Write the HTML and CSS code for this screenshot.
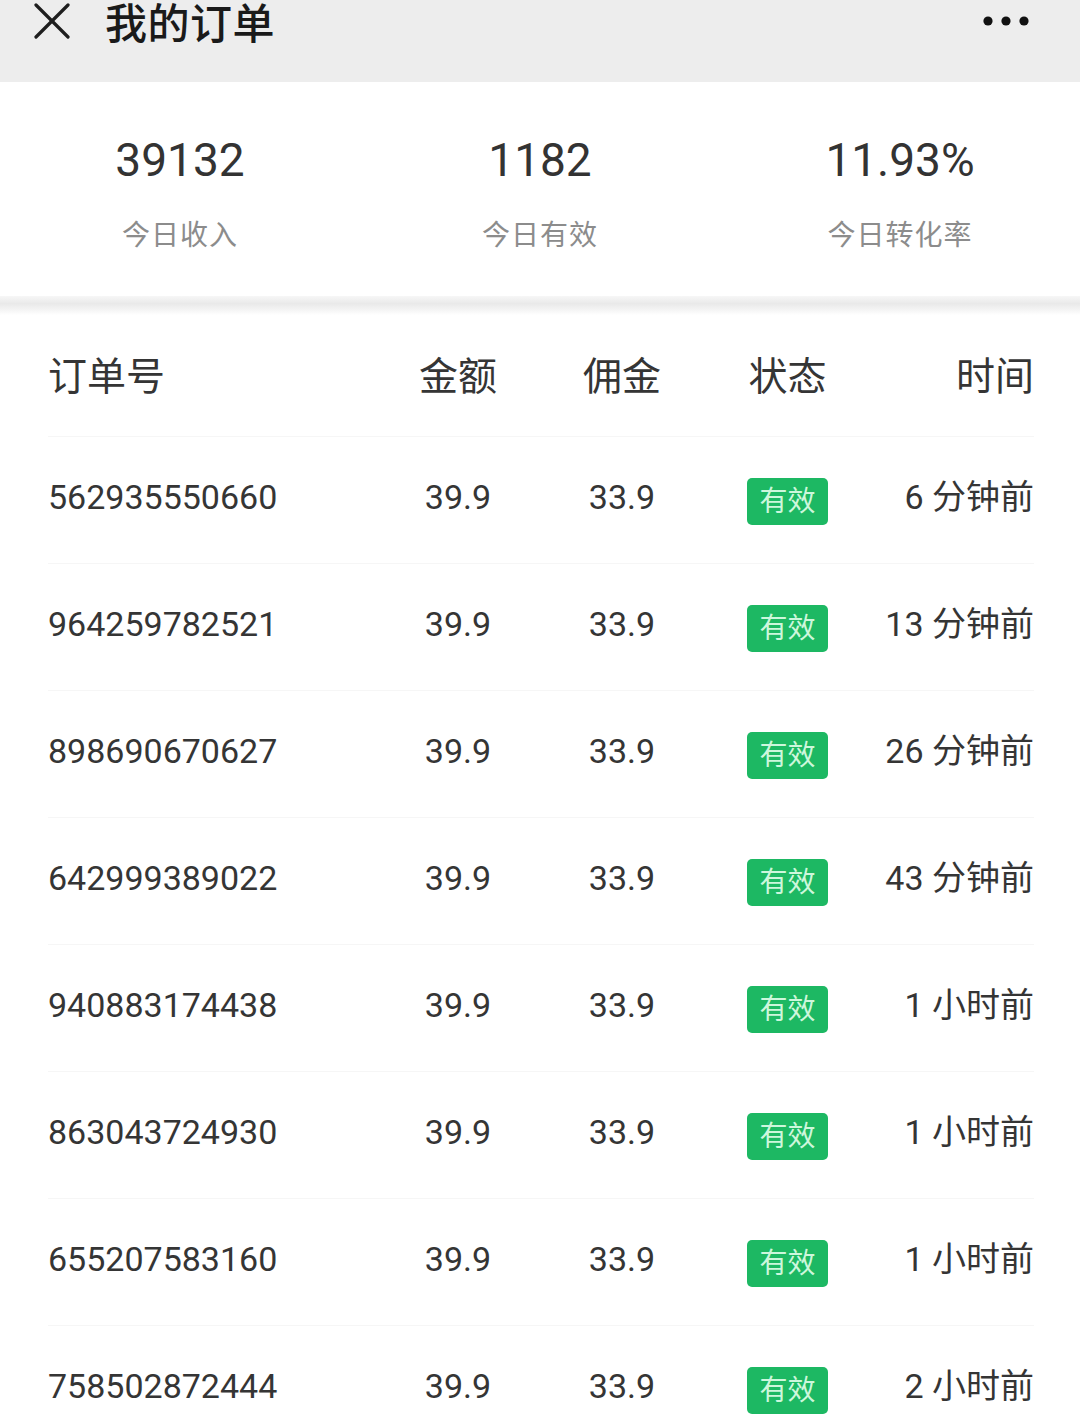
FILE: index.html
```html
<!DOCTYPE html>
<html lang="zh-CN">
<head>
<meta charset="utf-8">
<title>我的订单</title>
<link rel="stylesheet" href="styles.css">
</head>
<body>
<header class="topbar">
  <div class="topbar-row">
    <svg class="close-icon" width="38" height="36" viewBox="0 0 38 36">
      <line x1="3" y1="2" x2="35" y2="34" stroke="#1e1e1e" stroke-width="3.2" stroke-linecap="round"/>
      <line x1="35" y1="2" x2="3" y2="34" stroke="#1e1e1e" stroke-width="3.2" stroke-linecap="round"/>
    </svg>
    <h1 class="title">我的订单</h1>
    <svg class="more-icon" width="50" height="12" viewBox="0 0 50 12">
      <circle cx="6" cy="6" r="4.6" fill="#111"/>
      <circle cx="24" cy="6" r="4.6" fill="#111"/>
      <circle cx="42" cy="6" r="4.6" fill="#111"/>
    </svg>
  </div>
</header>

<section class="stats">
  <div class="stat"><div class="stat-value">39132</div><div class="stat-label">今日收入</div></div>
  <div class="stat"><div class="stat-value">1182</div><div class="stat-label">今日有效</div></div>
  <div class="stat"><div class="stat-value">11.93%</div><div class="stat-label">今日转化率</div></div>
</section>

<div class="separator"></div>

<section class="table">
  <div class="row head">
    <div class="c-id">订单号</div>
    <div class="c-amt">金额</div>
    <div class="c-com">佣金</div>
    <div class="c-st">状态</div>
    <div class="c-time">时间</div>
  </div>
  <div class="row">
    <div class="c-id">562935550660</div><div class="c-amt">39.9</div><div class="c-com">33.9</div>
    <div class="c-st"><span class="badge">有效</span></div><div class="c-time">6 分钟前</div>
  </div>
  <div class="row">
    <div class="c-id">964259782521</div><div class="c-amt">39.9</div><div class="c-com">33.9</div>
    <div class="c-st"><span class="badge">有效</span></div><div class="c-time">13 分钟前</div>
  </div>
  <div class="row">
    <div class="c-id">898690670627</div><div class="c-amt">39.9</div><div class="c-com">33.9</div>
    <div class="c-st"><span class="badge">有效</span></div><div class="c-time">26 分钟前</div>
  </div>
  <div class="row">
    <div class="c-id">642999389022</div><div class="c-amt">39.9</div><div class="c-com">33.9</div>
    <div class="c-st"><span class="badge">有效</span></div><div class="c-time">43 分钟前</div>
  </div>
  <div class="row">
    <div class="c-id">940883174438</div><div class="c-amt">39.9</div><div class="c-com">33.9</div>
    <div class="c-st"><span class="badge">有效</span></div><div class="c-time">1 小时前</div>
  </div>
  <div class="row">
    <div class="c-id">863043724930</div><div class="c-amt">39.9</div><div class="c-com">33.9</div>
    <div class="c-st"><span class="badge">有效</span></div><div class="c-time">1 小时前</div>
  </div>
  <div class="row">
    <div class="c-id">655207583160</div><div class="c-amt">39.9</div><div class="c-com">33.9</div>
    <div class="c-st"><span class="badge">有效</span></div><div class="c-time">1 小时前</div>
  </div>
  <div class="row">
    <div class="c-id">758502872444</div><div class="c-amt">39.9</div><div class="c-com">33.9</div>
    <div class="c-st"><span class="badge">有效</span></div><div class="c-time">2 小时前</div>
  </div>
</section>
</body>
</html>
```

FILE: styles.css
```css
html, body {
  margin: 0;
  padding: 0;
  overflow: hidden;
  background: #ffffff;
}
body {
  font-family: "Roboto", "Noto Sans CJK SC", "Noto Sans", sans-serif;
  color: #333333;
}

.topbar {
  height: 82px;
  box-sizing: border-box;
  padding-top: 1px;
  background: #ededed;
}
.topbar-row {
  height: 44px;
  display: flex;
  align-items: center;
  padding: 0 48px 0 33px;
}
.close-icon {
  flex: none;
  margin-top: -4px;
}
.title {
  margin: 0 0 0 34px;
  padding-top: 3px;
  font-size: 42px;
  font-weight: 500;
  line-height: 44px;
  color: #1a1a1a;
  letter-spacing: 0.5px;
  flex: 1;
}
.more-icon {
  flex: none;
  margin-top: -4px;
}

.stats {
  height: 214px;
  display: grid;
  grid-template-columns: 1fr 1fr 1fr;
  background: #ffffff;
}
.stat {
  display: flex;
  flex-direction: column;
  align-items: center;
  padding-top: 50px;
}
.stat-value {
  font-size: 46px;
  line-height: 56px;
  color: #333333;
}
.stat-label {
  margin-top: 30px;
  font-size: 28px;
  line-height: 36px;
  letter-spacing: 1px;
  color: #8c8c8c;
}

.separator {
  height: 19px;
  background: linear-gradient(#f7f7f7 0%, #e9e9e9 40%, #f3f3f3 70%, #ffffff 100%);
}

.table {
  padding: 0 46px 0 48px;
}
.row {
  display: grid;
  grid-template-columns: 340px 140px 188px 143px 175px;
  align-items: center;
  box-sizing: border-box;
  border-bottom: 1px solid #f6f6f6;
  font-size: 34px;
  line-height: 40px;
  color: #353535;
}
.row:not(.head) {
  height: 127px;
  padding-bottom: 6px;
}
.row.head {
  height: 122px;
  font-size: 39px;
  padding-top: 2px;
}
.c-id {
  text-align: left;
}
.c-amt, .c-com {
  text-align: center;
}
.c-st {
  display: flex;
  justify-content: center;
}
.row:not(.head) .c-st {
  padding-top: 8px;
}
.c-time {
  text-align: right;
}
.badge {
  display: flex;
  align-items: center;
  justify-content: center;
  width: 81px;
  height: 47px;
  border-radius: 5px;
  background: #1db863;
  color: #cdf7dc;
  font-size: 28px;
  line-height: 47px;
}
```
